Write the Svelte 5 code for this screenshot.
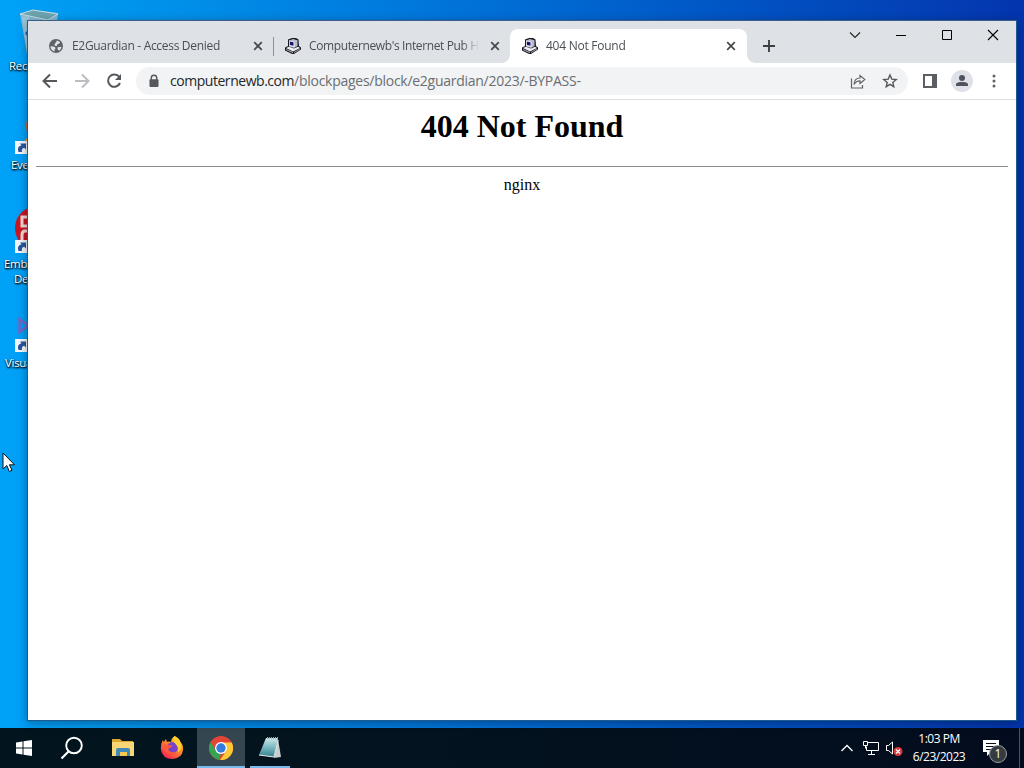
<script>
  const shortcuts = [
    { id: 'recycle', lines: ['Recycle Bin'], top: 8, left: 9 },
    { id: 'everything', lines: ['Everything'], top: 107, left: 11 },
    { id: 'embarcadero', lines: ['Embarcadero', 'Dev-C++'], top: 206, left: 4 },
    { id: 'visual', lines: ['Visual Studio'], top: 305, left: 5 },
  ];

  let tabs = [
    { title: 'E2Guardian - Access Denied', icon: 'globe', fit: 'fit-a' },
    { title: "Computernewb's Internet Pub H", icon: 'computer', fit: 'fit-b' },
    { title: '404 Not Found', icon: 'computer', fit: 'fit-c' },
  ];
  let active = 2;

  const selectTab = (i) => {
    active = i;
  };
</script>

<div class="desktop">
  {#each shortcuts as item}
    <div class="shortcut {item.id}" style="top: {item.top}px">
      <svg class="shortcut-icon" width="48" height="48" viewBox="0 0 48 48">
        {#if item.id === 'recycle'}
          <path d="M20 6 33 2 58 5 53 46 27 46Z" fill="#83b9d2" />
          <path d="M20 6 33 2 58 6 48 12Z" fill="#6ba4ae" stroke="#c5dce4" />
          <path d="m22 9 5 35 6 2-4-38Z" fill="#a6cfe0" opacity=".7" />
          <path d="m25 25 4-4v10Z" fill="#1769b7" />
        {:else if item.id === 'everything'}
          <circle cx="43" cy="19" r="17" fill="#c9643b" />
          <path d="m24 34 7-7v10Z" fill="#e59722" />
        {:else if item.id === 'embarcadero'}
          <circle cx="37" cy="22" r="22" fill="#c81722" />
          <path d="M31 11h-9v9h9M31 25h-6q-3 0-3 4v7" fill="none" stroke="#f2d7d4" stroke-width="3" />
        {:else}
          <path d="M19.500 14v13l9-6.500Z" fill="none" stroke="#7166c6" stroke-width="2.500" />
        {/if}
        {#if item.id !== 'recycle'}
          <path d="M15 34h13v13H15Z" fill="#f4f7fa" />
          <path d="M18.500 45q-2-5.500 3-6.800L20 36.500h6v6l-1.800-1.700q-3 .7-2.200 4.200Z" fill="#2855a0" />
        {/if}
      </svg>
      <div class="shortcut-label" style="padding-left: {item.left}px">
        {#each item.lines as line, i}
          <p class:second={i === 1}>{line}</p>
        {/each}
      </div>
    </div>
  {/each}

  <div class="window">
    <div class="tab-strip">
      {#each tabs as tab, i}
        <div class="tab" class:active={i === active} on:click={() => selectTab(i)}>
          {#if tab.icon === 'globe'}
            <svg class="favicon" width="16" height="16" viewBox="0 0 16 16">
              <circle cx="8" cy="8" r="7" fill="#5f6368" />
              <path d="M2.500 8.200 5.500 8.400q2.200.4 2 2.200l-1 .8.200 2C3.800 12.800 2.400 10.600 2.500 8.200ZM9 2.600q2 .3 3.200 1.900L10.500 6l-1.200.3L8.800 8 7 7.800 6.300 6.500 7.500 5ZM9.500 9.200l3.900-.5q-.2 2.700-2.200 4L9.700 11.500Z" fill="#dee1e6" />
            </svg>
          {:else}
            <svg class="favicon" width="16" height="16" viewBox="0 0 16 16">
              <path d="M3 1.500 7 0h4l2.500 1.500.5 6.500 2 1.500v2L9 16H7L0 12.500v-3L3 8Z" fill="#17171f" />
              <path d="m4 2.500 4-1.500 4.500 1.200V8L9 10 4 8.500Z" fill="#b9b9cb" />
              <path d="m4 2.500 5.500 1.200V9L4 7.800Z" fill="#f2f2f7" />
              <path d="m4.800 3.500 3.700.8v3.400L4.800 7Z" fill="#16166c" />
              <path d="m1 10 3-1.200 5 1.700L13 8.700l2 1.300-7 3.500Z" fill="#ededf3" />
              <path d="m1 11 7 3v1.200L1 12Zm8 3 6-3.500v1L9 15Z" fill="#a4a4b8" />
            </svg>
          {/if}
          <span class="tab-title"><span class={tab.fit}>{tab.title}</span></span>
          <svg class="tab-close" width="16" height="16" viewBox="0 0 16 16">
            <path d="m4.200 4.200 7.600 7.600m0-7.600-7.600 7.600" fill="none" stroke="#45484c" stroke-width="1.700" />
          </svg>
        </div>
      {/each}
      <svg class="new-tab" width="16" height="16" viewBox="0 0 16 16">
        <path d="M8 2v12M2 8h12" stroke="#3c4043" stroke-width="1.900" />
      </svg>
      <div class="controls">
        <svg width="46" height="29" viewBox="0 0 46 29"><path d="m18 11.500 5 5 5-5" fill="none" stroke="#222" stroke-width="1.100" /></svg>
        <svg width="46" height="29" viewBox="0 0 46 29"><path d="M18 14.500h10" stroke="#000" /></svg>
        <svg width="46" height="29" viewBox="0 0 46 29"><path d="M18.500 9.500h9v9h-9Z" fill="none" stroke="#000" /></svg>
        <svg width="46" height="29" viewBox="0 0 46 29"><path d="m18 9 10 10m0-10L18 19" fill="none" stroke="#000" stroke-width="1.100" /></svg>
      </div>
    </div>

    <div class="toolbar">
      <svg width="32" height="36" viewBox="0 0 32 36"><path d="M23 18H9.500m6.500-6.500L9.500 18l6.500 6.500" fill="none" stroke="#55585c" stroke-width="2" /></svg>
      <svg width="32" height="36" viewBox="0 0 32 36"><path d="M9 18h13.500M16 11.500l6.500 6.500-6.500 6.500" fill="none" stroke="#bbbdc0" stroke-width="2" /></svg>
      <svg width="32" height="36" viewBox="0 0 32 36">
        <path d="M21.300 14A6.200 6.200 0 1 0 22 20" fill="none" stroke="#55585c" stroke-width="2" />
        <path d="M23 11v6h-6Z" fill="#55585c" />
      </svg>
      <div class="address">
        <svg width="16" height="16" viewBox="0 0 16 16">
          <path d="M5.300 7V5a2.700 2.700 0 0 1 5.400 0v2" fill="none" stroke="#55585c" stroke-width="1.400" />
          <rect x="3.500" y="6.300" width="9" height="7.700" rx="1" fill="#55585c" />
        </svg>
        <p class="url"><span>computernewb.com</span>/blockpages/block/e2guardian/2023/-BYPASS-</p>
        <svg width="32" height="28" viewBox="0 0 32 28">
          <path d="M9.500 11.500V21h11v-3" fill="none" stroke="#5f6368" stroke-width="1.200" />
          <path d="M12 17.500c.3-5 3.500-6.500 6-6.500V8.500l4.800 4-4.800 4v-2.600c-2.900 0-4.600 1.200-6 3.600Z" fill="none" stroke="#5f6368" stroke-width="1.200" />
        </svg>
        <svg width="32" height="28" viewBox="0 0 32 28">
          <path d="m16 8 1.800 4.100 4.400.4-3.400 2.900 1 4.300-3.800-2.300-3.800 2.300 1-4.300-3.400-2.900 4.400-.4Z" fill="none" stroke="#55585c" stroke-width="1.400" />
        </svg>
      </div>
      <svg class="panel" width="16" height="16" viewBox="0 0 16 16">
        <path d="M1 1h14v14H1Z" fill="#5b5e62" />
        <path d="M3 3h7v10H3Z" fill="#fff" />
      </svg>
      <svg class="profile" width="22" height="22" viewBox="0 0 22 22">
        <circle cx="11" cy="11" r="11" fill="#dfe1e8" />
        <circle cx="11" cy="8" r="3" fill="#50535d" />
        <path d="M5 16v-1.500C5 12.500 8.500 12 11 12s6 .5 6 2.500V16Z" fill="#50535d" />
      </svg>
      <svg class="menu" width="16" height="16" viewBox="0 0 16 16">
        <circle cx="8" cy="3" r="1.500" fill="#5f6368" />
        <circle cx="8" cy="8" r="1.500" fill="#5f6368" />
        <circle cx="8" cy="13" r="1.500" fill="#5f6368" />
      </svg>
    </div>

    <div class="page">
      <h1>404 Not Found</h1>
      <hr />
      <p>nginx</p>
    </div>
  </div>

  <div class="taskbar">
    <div class="task">
      <svg width="18" height="18" viewBox="0 0 18 18">
        <path d="m1 3.500 6.500-1v6H1Zm7.500-1.200L17 1v7.500H8.500ZM1 9.500h6.500v6L1 14.500Zm7.500 0H17V17l-8.500-1.300Z" fill="#fff" />
      </svg>
    </div>
    <div class="task">
      <svg width="24" height="24" viewBox="0 0 24 24">
        <circle cx="14" cy="9.500" r="7.800" fill="none" stroke="#fff" stroke-width="1.900" />
        <path d="m8.500 15.500-7 7" stroke="#fff" stroke-width="2.200" />
      </svg>
    </div>
    <div class="task folder">
      <svg width="24" height="20" viewBox="0 0 24 20">
        <path d="M1 1h8l2 2h11v4H1Z" fill="#dca72f" />
        <path d="M1 4h22v14H1Z" fill="#f8d675" />
        <path d="M5 18v-6q0-2 2-2h10q2 0 2 2v6h-3v-4H9v4Z" fill="#3d89b7" />
        <path d="M9 14h7v4H9Z" fill="#f5c750" />
      </svg>
    </div>
    <div class="task firefox">
      <svg width="24" height="24" viewBox="0 0 24 24">
        <defs>
          <linearGradient id="fox" x1="1" y1="0" x2=".3" y2="1">
            <stop offset="0" stop-color="#fff13b" />
            <stop offset=".4" stop-color="#ff9f24" />
            <stop offset="1" stop-color="#f42653" />
          </linearGradient>
        </defs>
        <path d="M14.500 0q5 2 6 6 3 3 2.500 8-1 8-10 9Q2 23 .8 13q-.3-5 2-9l1 2L6 3l1 3q2-1 4 0 .5-4 3.500-6Z" fill="url(#fox)" />
        <circle cx="12.500" cy="11.500" r="5.500" fill="#7442cf" />
        <path d="M4 8q5 1 8.500 1.500L11 11.500q-3 0-2.500 2.500 2.500 3.500 7 1.500-3 5-8 2-4-4-3.500-9.500Z" fill="#ff5937" />
        <path d="M14.500 0q-3 4 1 8 4 4 2 9 5-4 3-10-1-4-6-7Z" fill="#ffcf2f" />
      </svg>
    </div>
    <div class="task open current">
      <svg width="24" height="24" viewBox="0 0 24 24">
        <circle cx="12" cy="12" r="12" fill="#e44435" />
        <path d="M1.600 6 7 15l5 3-2 5.800A12 12 0 0 1 1.600 6Z" fill="#34a552" />
        <path d="M12 6.500h10.700A12 12 0 0 1 11 24l6.200-9Z" fill="#fcc934" />
        <circle cx="12" cy="12" r="6" fill="#fff" />
        <circle cx="12" cy="12" r="4.700" fill="#347de0" />
      </svg>
    </div>
    <div class="task open notepad">
      <svg width="24" height="24" viewBox="0 0 24 24">
        <defs>
          <linearGradient id="note" x1="0" y1="0" x2="0" y2="1">
            <stop offset="0" stop-color="#d0e8e9" />
            <stop offset=".5" stop-color="#77b8c1" />
            <stop offset="1" stop-color="#367f8d" />
          </linearGradient>
        </defs>
        <path d="m20 3 3 18-7 1Z" fill="#c9ced0" />
        <path d="M8 2h12l-4 19-15-2Z" fill="url(#note)" />
        <path d="m1 19 15 2 4-17" fill="none" stroke="#e7eeee" />
        <path d="M9 2h11" stroke="#9caeb1" stroke-width="2" stroke-dasharray="1 1" />
      </svg>
    </div>

    <div class="tray">
      <svg width="24" height="24" viewBox="0 0 24 24"><path d="m6.500 15 5.500-5.500 5.500 5.500" fill="none" stroke="#fff" stroke-width="1.300" /></svg>
      <svg width="24" height="24" viewBox="0 0 24 24">
        <path d="M8.500 6.500h11v8h-12v-4M12.500 15v3M9 18.500h7" fill="none" stroke="#fff" />
        <path d="M4.500 5.500h4v4h-4Zm2 4v3" fill="none" stroke="#fff" />
      </svg>
      <svg width="24" height="24" viewBox="0 0 24 24">
        <path d="M3.500 9.500h2l4-3.500v12l-4-3.500h-2Z" fill="none" stroke="#fff" />
        <circle cx="15" cy="15.500" r="4.500" fill="#d83b3d" />
        <path d="m13 13.500 4 4m0-4-4 4" stroke="#fff" stroke-width="1.200" />
      </svg>
      <div class="clock">
        <p class="time">1:03 PM</p>
        <p class="date">6/23/2023</p>
      </div>
      <div class="notifications">
        <svg width="18" height="18" viewBox="0 0 18 18">
          <path d="M1 1h16v12H9l-4 4v-4H1Z" fill="#fff" />
          <path d="M4 4.500h10M4 7.500h10M4 10.500h6" stroke="#07101d" />
        </svg>
        <span class="count">1</span>
      </div>
      <div class="show-desktop"></div>
    </div>
  </div>

  <svg class="cursor" width="14" height="21" viewBox="0 0 14 21">
    <path d="M1 1v16l3.800-3.500 2.500 6 2.700-1.200-2.600-5.500H12.500Z" fill="#fff" stroke="#111" />
  </svg>
</div>

<style>
  :global(body) {
    margin: 0;
  }

  p {
    margin: 0;
  }

  svg {
    display: block;
    flex: none;
  }

  .desktop {
    position: relative;
    display: flex;
    flex-direction: column;
    justify-content: flex-end;
    width: 1024px;
    height: 768px;
    overflow: hidden;
    font-family: 'Open Sans', 'Noto Sans', sans-serif;
    background: linear-gradient(90deg, #00a2f8 0%, #0097ed 10%, #0078dc 40%, #0056c5 70%, #043cb2 94%, #0334ad 100%);
  }

  .shortcut {
    position: absolute;
    left: 0;
    width: 76px;
  }
  .shortcut-icon {
    overflow: visible;
  }
  .shortcut-label {
    padding-top: 2px;
    font-size: 11.5px;
    line-height: 15px;
    white-space: nowrap;
    letter-spacing: -0.3px;
    color: #fff;
    text-shadow: 0 1px 2px #000, 1px 1px 2px #000;
  }
  .shortcut-label .second {
    padding-left: 10px;
  }

  .window {
    position: absolute;
    top: 20px;
    left: 27px;
    width: 988px;
    height: 699px;
    border: 1px solid #1d5c93;
    border-top-color: #3e5f86;
    background-color: #fff;
    box-shadow: 0 2px 9px rgba(0, 0, 0, 0.35);
  }

  .tab-strip {
    display: flex;
    height: 42px;
    background-color: #dee1e6;
  }
  .tab {
    position: relative;
    display: flex;
    box-sizing: border-box;
    align-items: center;
    width: 237px;
    height: 34px;
    margin-top: 8px;
    padding: 0 7px 0 12px;
    color: #4b4f54;
  }
  .tab:first-child {
    margin-left: 8px;
  }
  .tab:first-child::after {
    content: '';
    position: absolute;
    right: -1px;
    top: 8px;
    width: 1px;
    height: 19px;
    background-color: #8f9298;
  }
  .tab.active {
    padding-right: 8px;
    background-color: #fff;
    border-radius: 8px 8px 0 0;
  }
  .tab.active::before,
  .tab.active::after {
    content: '';
    position: absolute;
    top: auto;
    bottom: 0;
    width: 8px;
    height: 8px;
  }
  .tab.active::before {
    left: -8px;
    background: radial-gradient(circle at 0 0, transparent 7.5px, #fff 8px);
  }
  .tab.active::after {
    right: -8px;
    background: radial-gradient(circle at 100% 0, transparent 7.5px, #fff 8px);
  }
  .tab-title {
    flex: 1;
    margin: 0 8px;
    overflow: hidden;
    white-space: nowrap;
    font-size: 12px;
    line-height: 18px;
    -webkit-mask-image: linear-gradient(90deg, #000 90%, transparent);
    mask-image: linear-gradient(90deg, #000 90%, transparent);
  }
  .fit-a {
    letter-spacing: -0.31px;
  }
  .fit-b {
    letter-spacing: -0.38px;
  }
  .fit-c {
    letter-spacing: -0.25px;
  }
  .new-tab {
    margin: 17px 0 0 14px;
  }
  .controls {
    display: flex;
    margin-left: auto;
  }

  .toolbar {
    display: flex;
    box-sizing: border-box;
    align-items: center;
    height: 37px;
    padding: 0 14px 0 6px;
    border-bottom: 1px solid #dcdde0;
  }
  .address {
    display: flex;
    flex: 1;
    align-items: center;
    height: 28px;
    margin: 0 14px 0 6px;
    padding: 0 2px 0 10px;
    border-radius: 14px;
    background-color: #f1f3f4;
  }
  .url {
    flex: 1;
    padding-left: 8px;
    font-size: 14px;
    line-height: 20px;
    letter-spacing: -0.27px;
    color: #6b6e72;
  }
  .url span {
    letter-spacing: -0.46px;
    color: #25272a;
  }
  .profile {
    margin: 0 13px 0 13px;
  }
  .menu {
    margin-right: 0;
  }

  .page {
    padding: 0 8px;
    text-align: center;
    font-family: 'Liberation Serif', serif;
    font-size: 16px;
    color: #000;
  }
  .page h1 {
    margin: 0;
    padding-top: 8px;
    font-size: 32px;
    line-height: 37px;
  }
  .page hr {
    margin: 21px 0 8px;
    border: 0;
    border-top: 1px solid #8c8c8c;
  }
  .page p {
    line-height: 20px;
  }

  .taskbar {
    display: flex;
    height: 40px;
    background: linear-gradient(90deg, #02151e, #03131f 40%, #030c1e);
    color: #fff;
  }
  .task {
    display: flex;
    box-sizing: border-box;
    align-items: center;
    justify-content: center;
    width: 48px;
    margin-right: 1px;
  }
  .task:first-child {
    margin-right: 0;
  }
  .task.folder {
    padding-left: 4px;
  }
  .task.firefox {
    width: 49px;
    padding-left: 3px;
  }
  .task.open {
    border-bottom: 2px solid #76b9ed;
    padding-top: 2px;
  }
  .task.current {
    margin-left: 1px;
    background-color: #344650;
  }
  .task.notepad {
    width: 40px;
    margin-left: 4px;
  }
  .tray {
    display: flex;
    align-items: center;
    margin-left: auto;
  }
  .clock {
    width: 64px;
    margin-left: 0;
    text-align: center;
    white-space: nowrap;
    font-size: 12px;
    line-height: 18px;
    letter-spacing: -0.5px;
  }
  .notifications {
    position: relative;
    margin-left: 11px;
    padding-right: 19px;
  }
  .count {
    position: absolute;
    left: 7px;
    top: 6px;
    width: 16px;
    height: 16px;
    border: 1px solid #9a9ea2;
    border-radius: 50%;
    background-color: #353b41;
    font-size: 12px;
    line-height: 16px;
    text-align: center;
  }
  .show-desktop {
    width: 4px;
    height: 40px;
    border-left: 1px solid #4f5662;
  }

  .cursor {
    position: absolute;
    left: 2px;
    top: 452px;
  }
</style>
